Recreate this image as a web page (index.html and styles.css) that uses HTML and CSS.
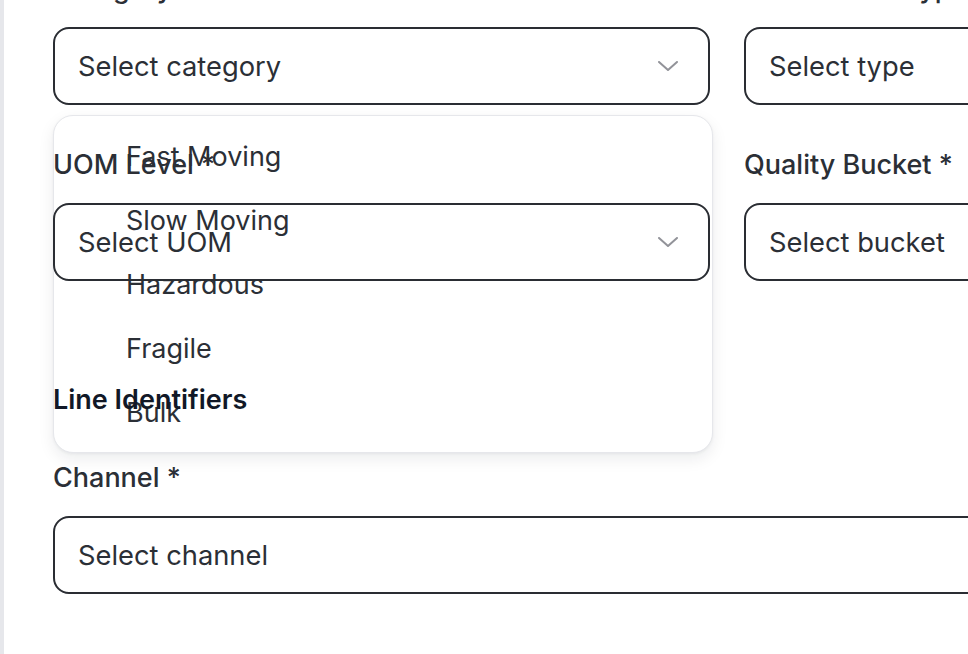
FILE: index.html
```html
<!DOCTYPE html>
<html lang="en">
<head>
<meta charset="utf-8">
<title>Line form</title>
<link rel="stylesheet" href="styles.css">
</head>
<body>
<div class="page">
  <div class="form">
    <div class="grid">
      <div class="field field-open">
        <label class="label">Category *</label>
        <div class="select">
          <span>Select category</span>
          <svg class="chev" width="20" height="10" viewBox="0 0 20 10"><polyline points="1,1 10,9 19,1" fill="none" stroke="#929399" stroke-width="2" stroke-linecap="round" stroke-linejoin="round"/></svg>
        </div>
        <ul class="menu">
          <li>Fast Moving</li>
          <li>Slow Moving</li>
          <li>Hazardous</li>
          <li>Fragile</li>
          <li>Bulk</li>
        </ul>
      </div>
      <div class="field">
        <label class="label">Transaction Type *</label>
        <div class="select"><span>Select type</span>
          <svg class="chev" width="20" height="10" viewBox="0 0 20 10"><polyline points="1,1 10,9 19,1" fill="none" stroke="#929399" stroke-width="2" stroke-linecap="round" stroke-linejoin="round"/></svg>
        </div>
      </div>
      <div class="field">
        <label class="label">UOM Level *</label>
        <div class="select">
          <span>Select UOM</span>
          <svg class="chev" width="20" height="10" viewBox="0 0 20 10"><polyline points="1,1 10,9 19,1" fill="none" stroke="#929399" stroke-width="2" stroke-linecap="round" stroke-linejoin="round"/></svg>
        </div>
      </div>
      <div class="field">
        <label class="label">Quality Bucket *</label>
        <div class="select"><span>Select bucket</span>
          <svg class="chev" width="20" height="10" viewBox="0 0 20 10"><polyline points="1,1 10,9 19,1" fill="none" stroke="#929399" stroke-width="2" stroke-linecap="round" stroke-linejoin="round"/></svg>
        </div>
      </div>
    </div>

    <h3 class="section">Line Identifiers</h3>

    <div class="field">
      <label class="label">Channel *</label>
      <div class="select"><span>Select channel</span>
        <svg class="chev" width="20" height="10" viewBox="0 0 20 10"><polyline points="1,1 10,9 19,1" fill="none" stroke="#929399" stroke-width="2" stroke-linecap="round" stroke-linejoin="round"/></svg>
      </div>
    </div>
  </div>
</div>
</body>
</html>
```

FILE: styles.css
```css
* { box-sizing: border-box; }

html, body {
  margin: 0;
  padding: 0;
  background: #ffffff;
  overflow: hidden;
}

body {
  font-family: "Inter", "Noto Sans", "Liberation Sans", sans-serif;
  color: #2b2f36;
}

.page {
  isolation: isolate;
  background: #ffffff;
  border-left: 4px solid #e6e7eb;
  min-height: 760px;
  padding-left: 49px;
}

.form {
  width: 1348px;
  margin-top: -29px;
}

.grid {
  display: grid;
  grid-template-columns: 657px 657px;
  column-gap: 34px;
  row-gap: 42px;
}

.field {
  display: flex;
  flex-direction: column;
}

.field-open {
  position: relative;
}

.label {
  display: block;
  font-size: 27px;
  line-height: 35px;
  font-weight: 550;
  color: #2b2f36;
  margin-bottom: 21px;
}

.select {
  height: 78px;
  border: 2px solid #2a2d33;
  border-radius: 16px;
  background: transparent;
  padding: 0 30px 0 23px;
  display: flex;
  align-items: center;
  justify-content: space-between;
  font-size: 27.3px;
  color: #2b2f36;
}

.chev {
  flex: none;
}

.menu {
  list-style: none;
  margin: 0;
  position: absolute;
  z-index: -1;
  top: calc(100% + 10px);
  left: 0;
  width: 660px;
  padding: 8px 0;
  background: #ffffff;
  border: 1px solid #e6e7eb;
  border-radius: 20px;
  box-shadow: 0 6px 16px rgba(17, 24, 39, 0.08), 0 1px 3px rgba(17, 24, 39, 0.05);
}

.menu li {
  height: 64px;
  display: flex;
  align-items: center;
  padding-left: 72px;
  font-size: 27px;
  color: #2b2f36;
}

.section {
  margin: 101px 0 43px;
  font-size: 27px;
  line-height: 35px;
  font-weight: 600;
  color: #111827;
}
```
